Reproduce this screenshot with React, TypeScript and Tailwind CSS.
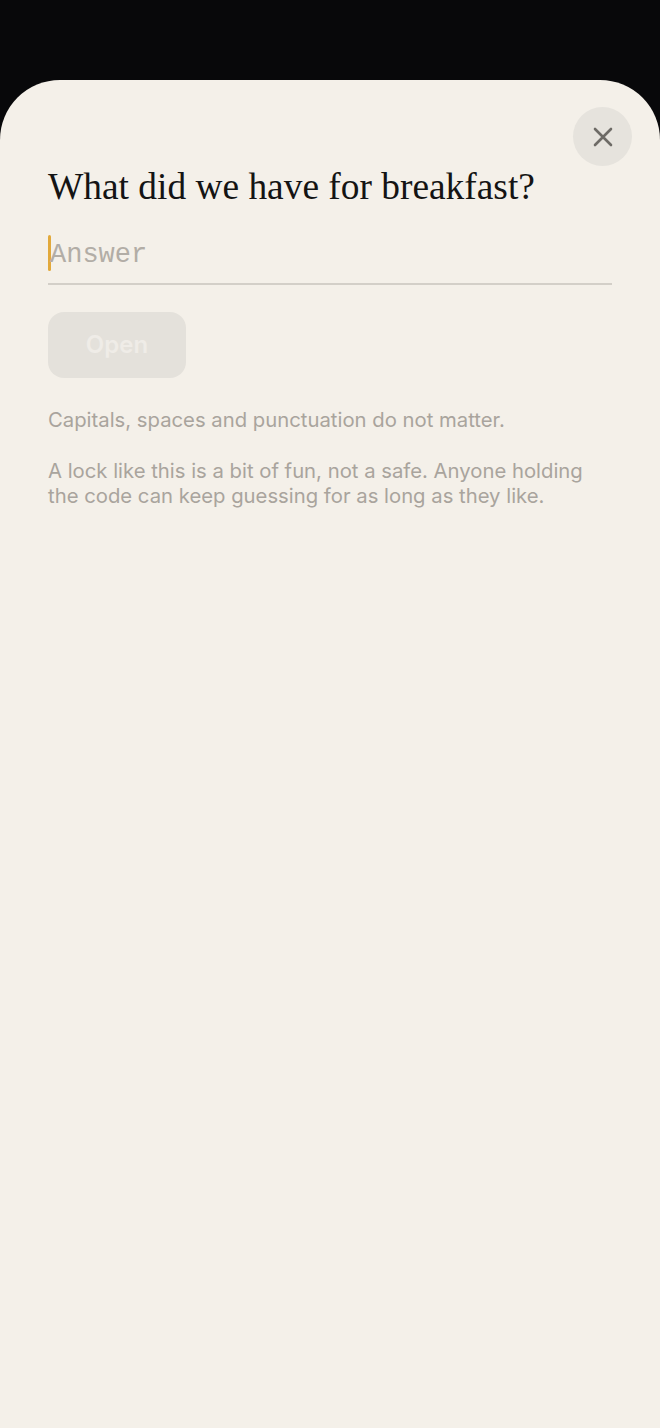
import React from "react";

export default function App() {
  return (
    <div className="min-h-[1428px] w-[660px] bg-[#08080a] pt-[80px] flex flex-col">
      <div className="flex-1 bg-[#f4f0e9] rounded-t-[60px] relative px-[48px] pt-[87px]">
        <button className="absolute right-[28px] top-[27px] w-[59px] h-[59px] rounded-full bg-[#e6e3dd] flex items-center justify-center">
          <svg width="22" height="22" viewBox="0 0 22 22" fill="none">
            <path d="M3 3L19 19M19 3L3 19" stroke="#6e6b66" strokeWidth="2.6" strokeLinecap="round" />
          </svg>
        </button>
        <h1
          className="text-[37.4px] leading-[40px] text-[#141414] m-0 whitespace-nowrap"
          style={{ fontFamily: '"Liberation Serif", "DejaVu Serif", serif' }}
        >
          What did we have for breakfast?
        </h1>
        <div className="mt-[28px] border-b-[2px] border-[#d3cfc8] h-[50px] flex items-start">
          <div className="relative flex items-center h-[36px]">
            <span className="w-[3px] h-[36px] bg-[#e2a93b] rounded-[2px]" />
            <span
              className="text-[27px] leading-[36px] text-[#b2ada6] -ml-[1px] pt-[3px]"
              style={{ fontFamily: '"Liberation Mono", "DejaVu Sans Mono", monospace' }}
            >
              Answer
            </span>
          </div>
        </div>
        <div
          className="mt-[27px] w-[138px] h-[66px] rounded-[16px] bg-[#e4e1db] flex items-center justify-center text-[24px] font-semibold text-[#efece7]"
          style={{ fontFamily: 'Inter, "Noto Sans", sans-serif' }}
        >
          Open
        </div>
        <div
          className="mt-[29px] text-[20.3px] leading-[25px] text-[#a9a49d]"
          style={{ fontFamily: 'Inter, "Noto Sans", sans-serif' }}
        >
          <p className="m-0">Capitals, spaces and punctuation do not matter.</p>
          <p className="m-0 mt-[26px] pr-[20px]">
            A lock like this is a bit of fun, not a safe. Anyone holding the code can keep guessing for as long as they like.
          </p>
        </div>
      </div>
    </div>
  );
}
